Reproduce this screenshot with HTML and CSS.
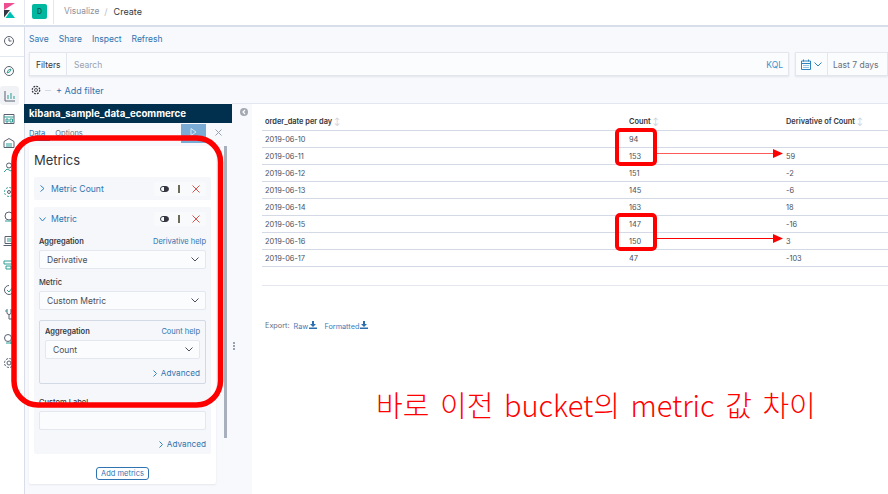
FILE: index.html
```html
<!DOCTYPE html>
<html lang="ko">
<head>
    <meta charset="UTF-8">
    <meta name="viewport" content="width=device-width, initial-scale=1.0">
    <title>Visualize - Kibana</title>
    <link rel="stylesheet" href="styles.css">
</head>
<body>
    <div class="app">
        <nav class="rail">
            <div class="rail-logo">
                <svg width="11" height="15" viewBox="0 0 11 15"><path d="M0 0H11L0 7Z" fill="#ee4d8f"/><path d="M0 7L6 7 0 14.5Z" fill="#343741"/><path d="M1.5 15H11L6 8.5Z" fill="#00bfb3"/></svg>
            </div>
            <div class="rail-list">
                <svg class="rail-icon first" viewBox="0 0 12 12"><circle cx="6" cy="6" r="4.5"/><path d="M6 3V6H8.5"/></svg>
                <div class="rail-sep"></div>
                <svg class="rail-icon before-active" viewBox="0 0 12 12"><circle cx="6" cy="6" r="4.5"/><path class="teal" d="M8 4L6.8 6.8 4 8 5.2 5.2Z"/></svg>
                <div class="rail-active"><svg class="rail-icon" viewBox="0 0 12 12"><path d="M1 1V11H11"/><path class="teal" d="M4 9V5M7 9V3M10 9V6"/></svg></div>
                <svg class="rail-icon" viewBox="0 0 12 12"><path d="M1 1.5H11V10.5H1Z"/><path class="teal" d="M1 4H11M3 6V9H5V6ZM7 6V9H9.5V6Z"/></svg>
                <svg class="rail-icon" viewBox="0 0 12 12"><path d="M1 4.5L6 1.5 11 4.5V10.5H1Z"/><path class="teal" d="M3 7H9M3 9H9"/></svg>
                <svg class="rail-icon" viewBox="0 0 12 12"><circle cx="6" cy="3.5" r="2.5"/><path class="teal" d="M1 10L4 7 8 9 11 6"/></svg>
                <svg class="rail-icon" viewBox="0 0 12 12"><circle class="teal" cx="6" cy="6" r="4.5" stroke-dasharray="2 1.5"/><circle cx="6" cy="6" r="1.5"/></svg>
                <svg class="rail-icon" viewBox="0 0 12 12"><circle cx="6" cy="5" r="4"/><path class="teal" d="M2 10H9M8 7L11 10"/></svg>
                <svg class="rail-icon" viewBox="0 0 12 12"><path d="M2 1.5H10V8.5H2ZM0.5 10.5H11.5"/><path class="teal" d="M4 4H8M4 6H8"/></svg>
                <svg class="rail-icon" viewBox="0 0 12 12"><path class="teal" d="M1 2H11V5H1ZM3 7H8V10H3Z"/></svg>
                <svg class="rail-icon" viewBox="0 0 12 12"><path d="M10.5 6A4.5 4.5 0 1 1 6 1.5"/><path class="teal" d="M4 6L6 8 10 3"/></svg>
                <svg class="rail-icon" viewBox="0 0 12 12"><path d="M4 1V5C4 7 8 7 8 5V1M6 7V11H9"/><path class="teal" d="M2 3H4M8 3H10"/></svg>
                <svg class="rail-icon" viewBox="0 0 12 12"><circle cx="5" cy="5" r="3.5"/><path class="teal" d="M3 10H11M8 8V11"/></svg>
                <svg class="rail-icon" viewBox="0 0 12 12"><circle cx="6" cy="6" r="2"/><circle cx="6" cy="6" r="4.5" stroke-dasharray="2.2 1.3"/></svg>
            </div>
        </nav>

        <div class="main">
            <header class="topbar">
                <div class="space-cell"><span class="space-badge">D</span></div>
                <div class="crumbs"><span class="crumb-link">Visualize</span><span class="crumb-sep">/</span><span class="crumb-now">Create</span></div>
            </header>

            <div class="menu">
                <a>Save</a><a>Share</a><a>Inspect</a><a>Refresh</a>
            </div>

            <div class="query-row">
                <div class="query-bar">
                    <span class="query-label">Filters</span>
                    <span class="query-input">Search</span>
                    <a class="query-kql">KQL</a>
                </div>
                <div class="date-box">
                    <span class="date-icons">
                        <svg width="10" height="11" viewBox="0 0 10 11"><path d="M.5 2H9.5V10.5H.5ZM.5 4.5H9.5M2.5 .5V2.5M7.5 .5V2.5M2.5 6.5H3.5M4.5 6.5H5.5M6.5 6.5H7.5M2.5 8.5H3.5M4.5 8.5H5.5M6.5 8.5H7.5" fill="none" stroke="#2f84c0"/></svg>
                        <svg width="8" height="5" viewBox="0 0 8 5"><path d="M.5 .5L4 4 7.5 .5" fill="none" stroke="#2f84c0"/></svg>
                    </span>
                    <span class="date-text">Last 7 days</span>
                </div>
            </div>

            <div class="filter-row">
                <svg width="10" height="10" viewBox="0 0 12 12"><circle cx="6" cy="6" r="1.8" fill="none" stroke="#343741"/><circle cx="6" cy="6" r="4.5" fill="none" stroke="#343741" stroke-width="1.5" stroke-dasharray="2.2 1.3"/></svg>
                <span class="filter-dash"></span>
                <a class="add-filter">+ Add filter</a>
            </div>

            <div class="editor">
                <aside class="sidebar">
                    <div class="index-title">kibana_sample_data_ecommerce</div>
                    <div class="tabs">
                        <a class="tab tab-on">Data</a>
                        <a class="tab">Options</a>
                        <span class="run-btn"><svg width="7" height="8" viewBox="0 0 7 8"><path d="M1 .5L6 4 1 7.5Z" fill="none" stroke="#d5e4f1"/></svg></span>
                        <span class="close-btn"><svg width="7" height="7" viewBox="0 0 7 7"><path d="M.5 .5L6.5 6.5M6.5 .5L.5 6.5" stroke="#98a2b3"/></svg></span>
                    </div>
                    <div class="panel-wrap">
                        <div class="panel">
                            <h2 class="panel-title">Metrics</h2>

                            <div class="agg agg-closed">
                                <div class="agg-head">
                                    <svg class="agg-arrow" width="5" height="7" viewBox="0 0 5 7"><path d="M.5 .5L4 3.5 .5 6.5" fill="none" stroke="#2f84c0"/></svg>
                                    <span class="agg-name">Metric Count</span>
                                    <span class="agg-tools">
                                        <span class="tool-toggle"></span>
                                        <span class="tool-grab"></span>
                                        <svg width="8" height="8" viewBox="0 0 8 8"><path d="M.5 .5L7.5 7.5M7.5 .5L.5 7.5" stroke="#d9534f"/></svg>
                                    </span>
                                </div>
                            </div>

                            <div class="agg agg-open">
                                <div class="agg-head">
                                    <svg class="agg-arrow" width="7" height="5" viewBox="0 0 7 5"><path d="M.5 .5L3.5 4 6.5 .5" fill="none" stroke="#2f84c0"/></svg>
                                    <span class="agg-name">Metric</span>
                                    <span class="agg-tools">
                                        <span class="tool-toggle"></span>
                                        <span class="tool-grab"></span>
                                        <svg width="8" height="8" viewBox="0 0 8 8"><path d="M.5 .5L7.5 7.5M7.5 .5L.5 7.5" stroke="#d9534f"/></svg>
                                    </span>
                                </div>

                                <div class="field-head field-first"><label>Aggregation</label><a>Derivative help</a></div>
                                <div class="select"><span>Derivative</span><svg width="8" height="5" viewBox="0 0 8 5"><path d="M.5 .5L4 4 7.5 .5" fill="none" stroke="#4a4f5b"/></svg></div>

                                <div class="field-head field-metric"><label class="label-plain">Metric</label></div>
                                <div class="select"><span>Custom Metric</span><svg width="8" height="5" viewBox="0 0 8 5"><path d="M.5 .5L4 4 7.5 .5" fill="none" stroke="#4a4f5b"/></svg></div>

                                <div class="sub-box">
                                    <div class="field-head"><label>Aggregation</label><a>Count help</a></div>
                                    <div class="select"><span>Count</span><svg width="8" height="5" viewBox="0 0 8 5"><path d="M.5 .5L4 4 7.5 .5" fill="none" stroke="#4a4f5b"/></svg></div>
                                    <a class="advanced"><svg width="4" height="7" viewBox="0 0 4 7"><path d="M.5 .5L3.5 3.5 .5 6.5" fill="none" stroke="#2f84c0"/></svg>Advanced</a>
                                </div>

                                <div class="field-head field-custom"><label class="label-plain">Custom Label</label></div>
                                <div class="select"></div>
                                <a class="advanced"><svg width="4" height="7" viewBox="0 0 4 7"><path d="M.5 .5L3.5 3.5 .5 6.5" fill="none" stroke="#2f84c0"/></svg>Advanced</a>
                            </div>

                            <div class="panel-foot"><button class="add-btn">Add metrics</button></div>
                        </div>
                        <div class="scroll-thumb"></div>
                    </div>
                </aside>

                <div class="handle">
                    <span class="collapse"><svg width="8" height="8" viewBox="0 0 8 8"><path d="M5 2L3 4 5 6" fill="none" stroke="#fff" stroke-width="1.2"/></svg></span>
                    <span class="grip"></span>
                </div>

                <section class="content">
                    <table class="data">
                        <thead>
                            <tr><th class="col-date">order_date per day <i>&#8597;</i></th><th class="col-count">Count <i>&#8597;</i></th><th>Derivative of Count <i>&#8597;</i></th></tr>
                        </thead>
                        <tbody>
                            <tr><td>2019-06-10</td><td>94</td><td></td></tr>
                            <tr><td>2019-06-11</td><td>153</td><td>59</td></tr>
                            <tr><td>2019-06-12</td><td>151</td><td>-2</td></tr>
                            <tr><td>2019-06-13</td><td>145</td><td>-6</td></tr>
                            <tr><td>2019-06-14</td><td>163</td><td>18</td></tr>
                            <tr><td>2019-06-15</td><td>147</td><td>-16</td></tr>
                            <tr><td>2019-06-16</td><td>150</td><td>3</td></tr>
                            <tr><td>2019-06-17</td><td>47</td><td>-103</td></tr>
                        </tbody>
                    </table>
                    <div class="table-foot"></div>
                    <div class="export">
                        <span class="export-label">Export:</span>
                        <a>Raw <svg width="8" height="8" viewBox="0 0 8 8"><path d="M3 0H5V3H7L4 6 1 3H3ZM0 6.5H8V8H0Z" fill="#2a6fb0"/></svg></a>
                        <a>Formatted <svg width="8" height="8" viewBox="0 0 8 8"><path d="M3 0H5V3H7L4 6 1 3H3ZM0 6.5H8V8H0Z" fill="#2a6fb0"/></svg></a>
                    </div>
                </section>
            </div>
        </div>
    </div>

    <!-- annotations drawn on top of the screenshot -->
    <svg class="marks" width="888" height="494" viewBox="0 0 888 494">
        <rect x="14" y="138" width="206.5" height="267" rx="24" fill="none" stroke="#ff0000" stroke-width="5.5"/>
        <rect x="617" y="130" width="38" height="34" rx="3" fill="none" stroke="#ff0000" stroke-width="4"/>
        <rect x="617" y="215" width="38" height="34" rx="3" fill="none" stroke="#ff0000" stroke-width="4"/>
        <path d="M657 153.5H774" stroke="#ff5a5a" stroke-width="1.2"/>
        <path d="M773 149V158L783 153.5Z" fill="#ff0000"/>
        <path d="M657 238.5H774" stroke="#ff0000" stroke-width="1"/>
        <path d="M773 234V243L783 238.5Z" fill="#ff0000"/>
    </svg>
    <div class="note">바로 이전 bucket의 metric 값 차이</div>
</body>
</html>
```

FILE: styles.css
```css
* {
    box-sizing: border-box;
}
html, body {
    margin: 0;
    height: 494px;
    overflow: hidden;
}
body {
    font-family: Inter, "Noto Sans", sans-serif;
    font-size: 8.5px;
    color: #343741;
    background-color: #f8f9fc;
    position: relative;
}
a {
    color: #2f74b0;
    text-decoration: none;
}
.app {
    display: flex;
    height: 494px;
}

/* left nav */
.rail {
    width: 24px;
    flex: none;
    background-color: #fff;
    box-shadow: 1px 0 0 #d8dde8;
}
.rail-logo {
    height: 27px;
    padding: 3px 0 0 4px;
    border-bottom: 2px solid #d8deea;
}
.rail-list {
    display: flex;
    flex-direction: column;
    align-items: flex-start;
    padding: 8px 0 0 3px;
}
.rail-icon {
    width: 12px;
    height: 12px;
    fill: none;
    stroke: #5a6070;
    stroke-width: 1;
    margin-bottom: 12.4px;
    flex: none;
}
.rail-icon.first,
.rail-icon.before-active {
    margin-bottom: 9px;
}
.rail-icon .teal {
    stroke: #2a9d94;
}
.rail-sep {
    width: 24px;
    height: 1px;
    margin: 0 0 8px -3px;
    background-color: #e3e7ef;
}
.rail-active {
    width: 19px;
    height: 19px;
    margin: 0 0 8px -3px;
    background-color: #f0f2f6;
    border-radius: 3px;
    display: flex;
    align-items: center;
    justify-content: center;
    flex: none;
}
.rail-active .rail-icon {
    margin: 0;
}

/* top bar */
.main {
    flex: 1;
    min-width: 0;
    display: flex;
    flex-direction: column;
}
.topbar {
    height: 27px;
    flex: none;
    display: flex;
    align-items: center;
    padding-bottom: 2px;
    background-color: #fff;
    border-bottom: 2px solid #d8deea;
}
.space-cell {
    width: 30px;
    height: 25px;
    padding-left: 7px;
    border-left: 1px solid #e3e7ef;
    border-right: 1px solid #e3e7ef;
    display: flex;
    align-items: center;
    margin-right: 10px;
}
.space-badge {
    width: 15px;
    height: 15px;
    border-radius: 2px;
    background-color: #00b8a0;
    color: #0b5d52;
    font-size: 7px;
    font-weight: 600;
    display: flex;
    align-items: center;
    justify-content: center;
}
.crumbs {
    display: flex;
    font-size: 9px;
}
.crumb-link {
    font-size: 8.4px;
    line-height: 11px;
    color: #8b92a0;
}
.crumb-sep {
    color: #b8bec9;
    margin: 0 6px 0 5px;
}
.crumb-now {
    color: #343741;
}

.menu {
    height: 22px;
    margin-bottom: 3px;
    flex: none;
    display: flex;
    align-items: center;
    gap: 10px;
    padding: 1px 0 0 5px;
}

.query-row {
    display: flex;
    gap: 6px;
    padding-left: 5px;
    height: 24px;
    flex: none;
}
.query-bar {
    width: 760px;
    display: flex;
    align-items: center;
    background-color: #fbfcfd;
    border: 1px solid #e3e6ec;
    box-shadow: 0 1px 2px rgba(152, 162, 179, 0.25);
}
.query-label {
    width: 37px;
    height: 100%;
    padding: 2px 0 0 6px;
    display: flex;
    align-items: center;
    border-right: 1px solid #e3e6ec;
    color: #343741;
}
.query-input {
    margin-left: 7px;
    padding-top: 2px;
    flex: 1;
    color: #98a2b3;
}
.query-kql {
    margin-right: 5px;
    padding-top: 2px;
    color: #3d93cf;
}
.date-box {
    flex: 1;
    display: flex;
    align-items: center;
    background-color: #fbfcfd;
    border: 1px solid #e3e6ec;
    box-shadow: 0 1px 2px rgba(152, 162, 179, 0.25);
}
.date-icons {
    width: 32px;
    height: 100%;
    padding-left: 5px;
    display: flex;
    align-items: center;
    gap: 3px;
    border-right: 1px solid #e3e6ec;
}
.date-text {
    margin-left: 5px;
    padding-top: 2px;
    color: #69707d;
}

.filter-row {
    height: 27px;
    flex: none;
    display: flex;
    align-items: center;
    padding: 1px 0 0 7px;
}
.filter-dash {
    width: 6px;
    height: 1px;
    margin: 0 4px;
    background-color: #d3dae6;
}
.add-filter {
    font-size: 9px;
    margin-left: 1px;
}

/* editor */
.editor {
    flex: 1;
    min-height: 0;
    display: flex;
}
.sidebar {
    width: 208px;
    flex: none;
    overflow: hidden;
    padding-top: 1px;
}
.index-title {
    height: 19px;
    padding-left: 5px;
    background-color: #01304e;
    color: #fff;
    font-size: 9.7px;
    font-weight: 700;
    line-height: 19px;
}
.tabs {
    height: 23px;
    display: flex;
    font-size: 7.5px;
}
.tab {
    padding: 6px 5px 0;
    height: 18px;
    color: #69707d;
}
.tab-on {
    color: #2f74b0;
    border-bottom: 1px solid #2f74b0;
}
.run-btn {
    margin-left: auto;
    margin-top: 1px;
    padding-top: 4px;
    width: 25px;
    height: 19px;
    background-color: #79abd4;
    display: flex;
    justify-content: center;
}
.close-btn {
    width: 26px;
    padding-left: 9px;
    height: 19px;
    display: flex;
    align-items: center;
}
.panel-wrap {
    display: flex;
    padding-left: 5px;
}
.panel {
    width: 187px;
    flex: none;
    height: 338px;
    background-color: #fff;
    padding: 6px 5px 0;
    border-radius: 2px;
    box-shadow: 0 1px 2px rgba(152, 162, 179, 0.2);
}
.panel-title {
    margin: 0 0 9px;
    font-size: 13px;
    line-height: 16px;
    font-weight: 400;
    color: #343741;
}
.scroll-thumb {
    width: 3px;
    height: 292px;
    margin-left: 8px;
    background-color: #a9b0bd;
}
.agg {
    background-color: #f5f7fa;
    border-radius: 2px;
    padding: 0 5px;
}
.agg-closed {
    height: 23px;
    margin-bottom: 7px;
}
.agg-open {
    height: 247px;
}
.agg-head {
    height: 23px;
    display: flex;
    align-items: center;
}
.agg-open .agg-head {
    height: 24px;
}
.agg-arrow {
    width: 7px;
    margin-right: 5px;
}
.agg-name {
    color: #2f74b0;
    font-size: 8.6px;
    flex: 1;
}
.agg-tools {
    display: flex;
    align-items: center;
    gap: 9px;
    padding: 3px 6px;
    background-color: #f9fafc;
    border-radius: 2px;
}
.tool-toggle {
    width: 9px;
    height: 6px;
    border-radius: 3px;
    border: 1px solid #343741;
    background: linear-gradient(90deg, #fff 45%, #343741 45%);
}
.tool-grab {
    width: 2px;
    height: 8px;
    margin-right: 3px;
    background-color: #6e6a58;
}
.field-head {
    display: flex;
    justify-content: space-between;
    align-items: center;
    height: 10px;
    font-size: 7.5px;
}
.field-head label {
    font-weight: 600;
    color: #343741;
}
.field-head label.label-plain {
    font-weight: 500;
}
.field-first {
    margin-top: 5px;
    margin-bottom: 4px;
}
.field-metric {
    margin-top: 8px;
    margin-bottom: 4px;
}
.field-custom {
    margin-top: 13px;
    margin-bottom: 4px;
}
.select {
    height: 19px;
    padding: 0 6px 0 7px;
    background-color: #fbfcfd;
    border: 1px solid #e3e7ef;
    border-radius: 2px;
    display: flex;
    align-items: center;
    justify-content: space-between;
    color: #4a4f5b;
}
.sub-box {
    height: 64px;
    margin-top: 10px;
    padding: 5px 5px 0;
    background-color: #f5f7fa;
    border: 1px solid #d3dae6;
    border-radius: 2px;
}
.sub-box .field-head {
    margin-bottom: 4px;
}
.advanced {
    display: flex;
    justify-content: flex-end;
    align-items: center;
    gap: 4px;
    margin-top: 9px;
    font-size: 8.2px;
}
.panel-foot {
    display: flex;
    justify-content: center;
    margin-top: 13px;
}
.add-btn {
    width: 53px;
    height: 13px;
    padding: 0;
    background-color: #fff;
    border: 1px solid #2f74b0;
    border-radius: 3px;
    font-family: inherit;
    font-size: 7.5px;
    color: #2f74b0;
}

/* drag handle */
.handle {
    width: 20px;
    flex: none;
    position: relative;
    border-top: 1px solid #e4e7ef;
}
.collapse {
    position: absolute;
    left: 8px;
    top: 4px;
    width: 8px;
    height: 8px;
    border-radius: 50%;
    background-color: #a3a8b2;
    display: flex;
}
.grip {
    position: absolute;
    left: 1px;
    top: 238px;
    width: 2px;
    height: 8px;
    background: repeating-linear-gradient(#98a2b3 0, #98a2b3 2px, transparent 2px, transparent 3px);
}

/* table */
.content {
    flex: 1;
    min-width: 0;
    background-color: #fff;
    border-top: 1px solid #e4e7ef;
    padding-left: 10px;
}
.data {
    width: 626px;
    table-layout: fixed;
    border-collapse: collapse;
    margin-top: 9px;
    font-size: 7.4px;
    color: #4a4f5b;
}
.data th {
    height: 17px;
    padding: 1px 0 0 3px;
    text-align: left;
    font-weight: 600;
    color: #343741;
    border-bottom: 1px solid #d3dae6;
}
.data th i {
    font-style: normal;
    font-weight: 400;
    color: #c3cad6;
}
.col-date {
    width: 364px;
}
.col-count {
    width: 157px;
}
.data td {
    height: 17px;
    padding: 1px 0 0 3px;
    border-bottom: 1px solid #d3dae6;
}
.table-foot {
    width: 626px;
    height: 19px;
    border-bottom: 1px solid #e4e7ef;
}
.export {
    margin: 35px 0 0 3px;
    display: flex;
    gap: 4px;
    font-size: 7.3px;
}
.export-label {
    color: #69707d;
}
.export a {
    color: #3b7dbb;
    word-spacing: -1px;
}
.export a + a {
    margin-left: 3px;
}

/* red notes over the page */
.marks {
    position: absolute;
    left: 0;
    top: 0;
}
.note {
    position: absolute;
    left: 376px;
    top: 384px;
    font-family: "Noto Sans CJK KR", "Noto Sans", sans-serif;
    font-size: 29px;
    line-height: 40px;
    font-weight: 300;
    color: #ff0000;
    white-space: nowrap;
    word-spacing: 2.5px;
}
```
